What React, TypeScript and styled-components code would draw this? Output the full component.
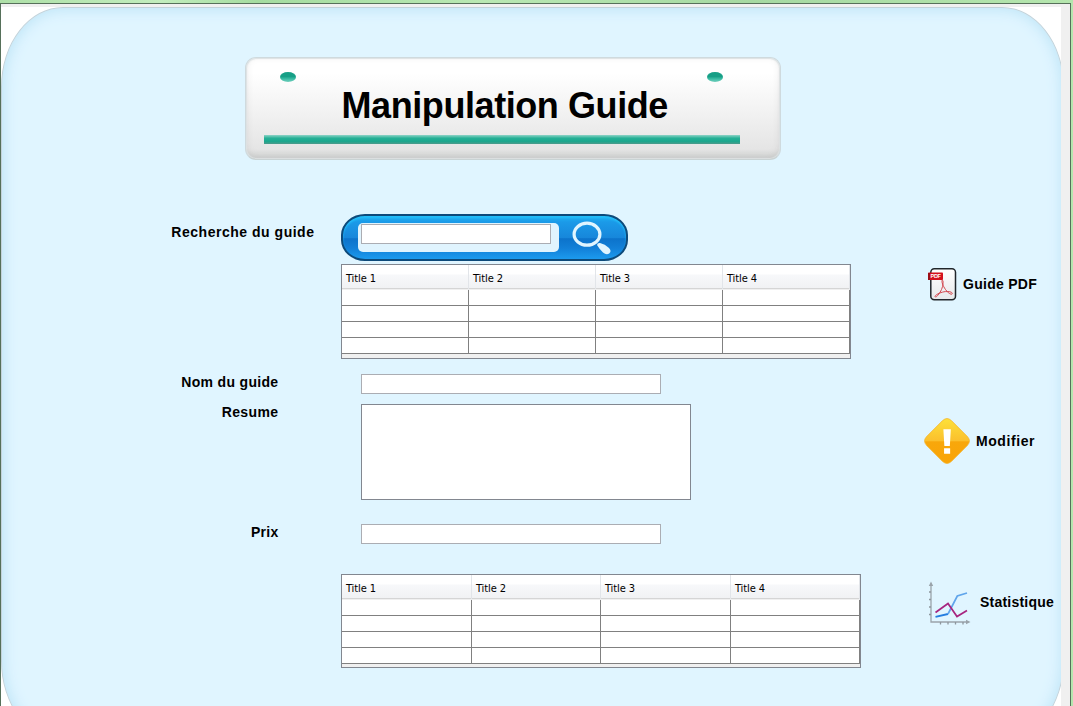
import React from "react";
import styled, { createGlobalStyle } from "styled-components";

const GlobalStyle = createGlobalStyle`
  * { box-sizing: border-box; }
  body { margin: 0; overflow: hidden; font-family: "Liberation Sans", Arial, sans-serif; }
`;

const Desktop = styled.div`
  width: 1073px;
  height: 706px;
  padding: 3px 2px 0 0;
  overflow: hidden;
  background: linear-gradient(90deg, #aee0a8, #c2edbd 15%, #a5dca0 24%, #b9e8b3 45%, #a6d9a2 70%, #b5e6ae);
`;

const WindowFrame = styled.div`
  height: 703px;
  padding: 3px 9px 0 0;
  border: 1px solid #56705a;
  border-bottom: 0;
  background: #f0f0f0;
`;

const Viewport = styled.div`
  height: 699px;
  overflow: hidden;
  background: #fff;
`;

const Card = styled.main`
  width: 1063px;
  height: 734px;
  padding-top: 49px;
  border: 1px solid #c3d3db;
  border-radius: 62px / 80px;
  background: #e0f5ff;
  box-shadow: inset 0 0 14px 2px #bfe5f7;
`;

const Sign = styled.header`
  display: flex;
  flex-direction: column;
  width: 536px;
  height: 103px;
  margin-left: 243px;
  padding: 14px 40px 0 18px;
  border: 1px solid #cfdade;
  border-bottom-color: #c9d3d4;
  border-radius: 11px;
  background: linear-gradient(#fff 15%, #f3f3f3 50%, #e5e5e5 90%, #d3d5d4);
  box-shadow: inset 0 0 1px 1px #dde2e3, inset 0 -2px 7px rgba(120, 120, 120, 0.2);
`;

const Pins = styled.div`
  display: flex;
  justify-content: space-between;
  padding: 0 17px 0 16px;
`;

const Pin = styled.span`
  width: 16px;
  height: 10px;
  border-radius: 50%;
  background: linear-gradient(#169f86 45%, #3bbda5 70%, #75cebd);
`;

const Heading = styled.h1`
  margin: 0 0 0 77.5px;
  height: 53px;
  line-height: 47px;
  font-size: 36px;
  font-weight: 700;
  letter-spacing: -0.42px;
  white-space: nowrap;
  color: #000;
`;

const Rule = styled.div`
  width: 476px;
  height: 9px;
  background: linear-gradient(#8fd3c7, #26b096 35%, #1aa78d 70%, #4d9a8b);
`;

const Body = styled.div`
  display: flex;
  padding-top: 54px;
`;

const Form = styled.section`
  display: flex;
  flex-direction: column;
  width: 860px;
`;

const Row = styled.div<{ $gap: number }>`
  display: flex;
  align-items: flex-start;
  margin-bottom: ${(p) => p.$gap}px;
`;

const Label = styled.label<{ $inset?: number; $drop?: number; $track: number }>`
  width: 339px;
  padding-right: ${(p) => p.$inset ?? 62.5}px;
  padding-top: ${(p) => p.$drop ?? 0}px;
  text-align: right;
  font-size: 14px;
  line-height: 16px;
  font-weight: 700;
  letter-spacing: ${(p) => p.$track}px;
  color: #000;
`;

const TextField = styled.input`
  width: 300px;
  height: 20px;
  margin-left: 20px;
  padding: 0 4px;
  border: 1px solid #abadb3;
  background: #fff;
  outline: 0;
`;

const TextBox = styled.textarea`
  width: 330px;
  height: 96px;
  margin-left: 20px;
  border: 1px solid #828790;
  background: #fff;
  resize: none;
  outline: 0;
`;

const SearchBar = styled.div`
  display: flex;
  align-items: flex-start;
  width: 287px;
  height: 47px;
  padding: 7px 0 0 15px;
  border: 2px solid #0d4a7a;
  border-radius: 24px / 21px;
  background: linear-gradient(#1fb2f4, #1b9ae8 14%, #1787db 50%, #0c73cb 53%, #1280d8 75%, #1c9bee);
  box-shadow: inset 0 2px 2px #23bdf8;
`;

const SearchWell = styled.div`
  width: 201px;
  height: 29px;
  padding: 1px 0 0 3px;
  border-radius: 5px;
  background: #e0f4fe;
`;

const SearchField = styled(TextField)`
  display: block;
  width: 190px;
  margin: 0;
`;

const SearchIcon = styled.svg`
  width: 42px;
  height: 37px;
  margin: -3px 0 0 12px;
`;

const Table = styled.div<{ $width: number; $foot: number; $gap?: number }>`
  width: ${(p) => p.$width}px;
  margin-left: 339px;
  margin-bottom: ${(p) => p.$gap ?? 0}px;
  padding-bottom: ${(p) => p.$foot}px;
  border: 1px solid #828790;
  background: #f0f0f0;
`;

const Line = styled.div<{ $cols: string }>`
  display: grid;
  grid-template-columns: ${(p) => p.$cols};
`;

const HeadCell = styled.div`
  height: 25px;
  padding: 1px 0 0 4px;
  border-right: 1px solid #e2e5e9;
  border-bottom: 1px solid #f0f0f0;
  background: linear-gradient(#fff 0 9px, #f7f8fa 10px, #f1f2f4 23px, #d5d5d5 23px);
  font-family: "DejaVu Sans Condensed", "DejaVu Sans", sans-serif;
  font-stretch: condensed;
  font-size: 11px;
  line-height: 25px;
  letter-spacing: -0.1px;
  color: #000;
`;

const Cell = styled.div`
  height: 16px;
  border-right: 1px solid #808080;
  border-bottom: 1px solid #808080;
  background: #fff;
`;

const Actions = styled.aside`
  display: flex;
  flex-direction: column;
  align-items: flex-start;
  padding-top: 53px;
`;

const Action = styled.button<{ $left: number; $gap: number; $space: number; $track: number; $lift?: number }>`
  display: flex;
  align-items: center;
  gap: ${(p) => p.$space}px;
  margin: 0 0 ${(p) => p.$gap}px ${(p) => p.$left}px;
  padding: 0;
  border: 0;
  background: none;
  font: 700 14px/16px "Liberation Sans", Arial, sans-serif;
  letter-spacing: ${(p) => p.$track}px;
  white-space: nowrap;
  color: #000;
  svg { flex: none; display: block; }
  span { padding-bottom: ${(p) => p.$lift ?? 0}px; }
`;

function GuideTable({ width, foot, cols, gap }: { width: number; foot: number; cols: string; gap?: number }) {
  return (
    <Table $width={width} $foot={foot} $gap={gap}>
      <Line $cols={cols}>
        {[1, 2, 3, 4].map((n) => <HeadCell key={n}>Title {n}</HeadCell>)}
      </Line>
      {[0, 1, 2, 3].map((r) => (
        <Line key={r} $cols={cols}>
          {[0, 1, 2, 3].map((c) => <Cell key={c} />)}
        </Line>
      ))}
    </Table>
  );
}

const PdfIcon = () => (
  <svg width="29" height="34" viewBox="0 -0.500 29 34">
    <defs>
      <linearGradient id="sheet" x1="0" y1="0" x2="0" y2="1">
        <stop offset="0" stopColor="#fff" />
        <stop offset="1" stopColor="#e6e8ea" />
      </linearGradient>
    </defs>
    <rect x="2.8" y="1.2" width="24.7" height="31" rx="3.5" fill="url(#sheet)" stroke="#20262b" strokeWidth="1.5" />
    <rect x="0" y="5" width="15" height="7.5" rx="0.8" fill="#d4101c" />
    <path d="M0 8V5.5h2v7H0z" fill="#9b0d15" />
    <text x="2.6" y="10.800" fontFamily="Liberation Sans, sans-serif" fontWeight="700" fontSize="5.5" textLength="10.500" fill="#fff">PDF</text>
    <path d="M14.300 12.500C13.200 14 15 18.500 17.500 22C19.500 25 23.500 28 24.300 26.200C24.800 24.300 20 23.600 16 24.300C12 25 7 27.500 7 29C7.800 31 11.800 26 13.500 22C15 18.500 15.800 13 14.300 12.500Z" fill="none" stroke="#d3474f" strokeWidth="1" />
  </svg>
);

const WarningIcon = () => (
  <svg width="48" height="48" viewBox="-0.5 -0.5 49 49">
    <defs>
      <linearGradient id="amber" x1="0" y1="0" x2="0" y2="1">
        <stop offset="0" stopColor="#fde13a" />
        <stop offset=".49" stopColor="#fbc02d" />
        <stop offset=".52" stopColor="#f8a70b" />
        <stop offset="1" stopColor="#f9a407" />
      </linearGradient>
    </defs>
    <path d="M19.500 3.200Q24 -1 28.500 3.200L44.800 19.500Q49 24 44.800 28.500L28.500 44.800Q24 49 19.500 44.800L3.200 28.500Q-1 24 3.200 19.500Z" fill="url(#amber)" stroke="#f5b42c" strokeWidth=".8" />
    <path d="M20.300 12h7.600l-1 17h-5.600zM21 31.500h6.200v5.500h-6.200z" fill="#fff" />
  </svg>
);

const ChartIcon = () => (
  <svg width="44" height="46" viewBox="0.500 -0.500 44 46" fill="none">
    <path d="M3.500 4v37.500H40" stroke="#9aa3aa" strokeWidth="1.300" />
    <path d="M1.300 5.500L3.500 1l2.200 4.500zM38.500 39.300L43 41.500l-4.500 2.200z" fill="#9aa3aa" />
    <path d="M1.500 11.500h2M1.500 19h2M1.500 26.500h2M1.500 34h2M13 41.500v2.500M20.500 41.500v2.500M28 41.500v2.500M35.500 41.500v2.500" stroke="#8d969d" strokeWidth="1.300" />
    <path d="M8 36.300L20.500 33.500" stroke="#247de0" strokeWidth="1.800" />
    <path d="M20.500 33.500L29.800 15.500L39.500 12.500" stroke="#60a5eb" strokeWidth="1.700" />
    <path d="M8 32L20.500 23L29.500 36L39.500 30" stroke="#a7257f" strokeWidth="1.700" />
  </svg>
);

export default function App() {
  return (
    <Desktop>
      <GlobalStyle />
      <WindowFrame>
        <Viewport>
          <Card>
            <Sign>
              <Pins><Pin /><Pin /></Pins>
              <Heading>Manipulation Guide</Heading>
              <Rule />
            </Sign>
            <Body>
              <Form>
                <Row $gap={3}>
                  <Label htmlFor="search" $inset={26.5} $drop={10} $track={0.52}>Recherche du guide</Label>
                  <SearchBar>
                    <SearchWell><SearchField id="search" /></SearchWell>
                    <SearchIcon viewBox="0 0 42 37">
                      <ellipse cx="16" cy="14.200" rx="12.900" ry="11" fill="none" stroke="#e0f5ff" strokeWidth="3.200" />
                      <path d="M26 25Q26.300 22.700 29 23Q34 24 38 28Q40.800 31 38.500 33.200Q35.500 35.500 32 32.500Q28 28.500 26 25Z" fill="#e0f5ff" />
                    </SearchIcon>
                  </SearchBar>
                </Row>
                <GuideTable width={510} foot={4} gap={15} cols="repeat(4, 127px)" />
                <Row $gap={10}>
                  <Label htmlFor="name" $track={0.33}>Nom du guide</Label>
                  <TextField id="name" />
                </Row>
                <Row $gap={24}>
                  <Label htmlFor="resume" $track={0.4}>Resume</Label>
                  <TextBox id="resume" />
                </Row>
                <Row $gap={30}>
                  <Label htmlFor="price" $track={0.25}>Prix</Label>
                  <TextField id="price" />
                </Row>
                <GuideTable width={520} foot={3} cols="130px 129px 130px 129px" />
              </Form>
              <Actions>
                <Action $left={66} $gap={116} $space={6} $track={0.27}><PdfIcon /><span>Guide PDF</span></Action>
                <Action $left={61} $gap={115} $space={5} $track={0.58}><WarningIcon /><span>Modifier</span></Action>
                <Action $left={66} $gap={0} $space={8} $track={0.22} $lift={2}><ChartIcon /><span>Statistique</span></Action>
              </Actions>
            </Body>
          </Card>
        </Viewport>
      </WindowFrame>
    </Desktop>
  );
}
